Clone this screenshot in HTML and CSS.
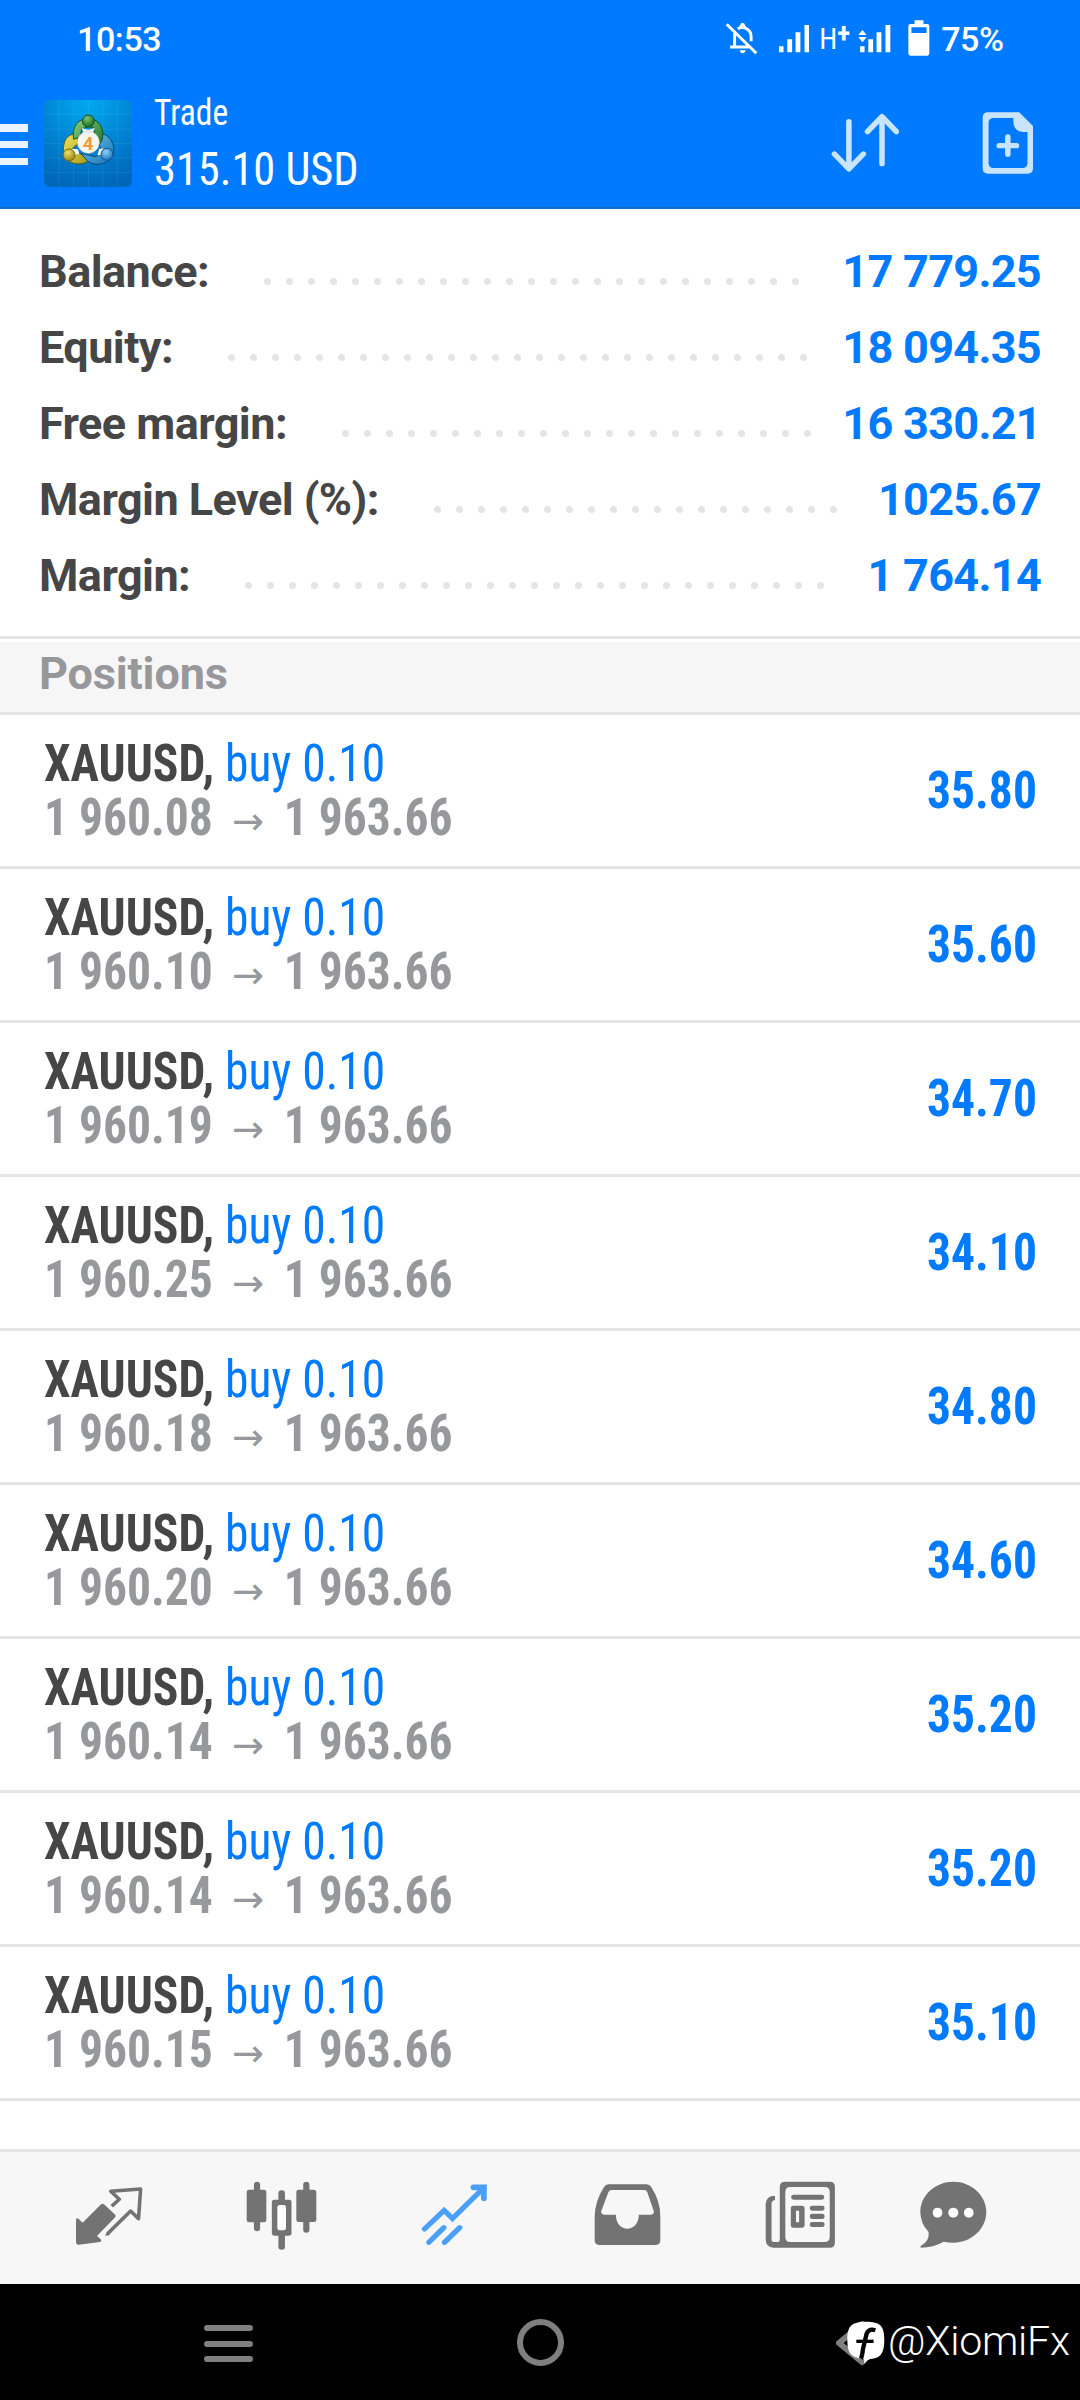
FILE: index.html
```html
<!DOCTYPE html>
<html lang="en">
<head>
<meta charset="utf-8">
<title>Trade</title>
<link rel="stylesheet" href="styles.css">
</head>
<body>
<header class="top">
  <div class="status">
    <span class="clock">10:53</span>
    <svg class="st bell" viewBox="536 60 96 108" preserveAspectRatio="none" fill="none" stroke="#fff" stroke-width="8.5">
      <path d="M541 73 627 160M564 99V140M551 141H605M573 86C592 76 613 90 612 112V124"/>
      <path d="M579 77Q581 68 587 68T595 77L600 84H576ZM579 151H596Q594 160 587 160T579 151Z" fill="#fff" stroke="none"/>
    </svg>
    <svg class="st sig1" viewBox="690 60 92 108" preserveAspectRatio="none" fill="#fff"><path d="M693 139h13v18h-13zM717 118h14v39h-14zM741 97h14v60h-14zM767 75h14v82h-14z"/></svg>
    <span class="net">H<span class="plus">+</span></span>
    <svg class="st sig2" viewBox="925 60 96 108" preserveAspectRatio="none" fill="#fff"><path d="M931 139h13v18h-13zM955 118h14v39h-14zM979 97h14v60h-14zM1005 75h14v82h-14zM938 90 950 105H926ZM938 127 950 111H926Z"/></svg>
    <svg class="st batt" viewBox="1070 60 63 108" preserveAspectRatio="none" fill="#fff"><path fill-rule="evenodd" d="M1089 61h26v11h11q6 0 6 7v81q0 7-6 7h-49q-6 0-6-7V79q0-7 6-7h12ZM1080 82v17h44V82Z"/></svg>
    <span class="pct">75%</span>
  </div>
  <div class="appbar">
    <div class="burger"><i></i><i></i><i></i></div>
    <svg class="logo" viewBox="42 30 264 261">
      <defs>
        <radialGradient id="bg" cx=".5" cy="0" r="1"><stop offset="0" stop-color="#00aaf0"/><stop offset=".55" stop-color="#0083d2"/><stop offset="1" stop-color="#0066b8"/></radialGradient>
        <linearGradient id="gr" x1="0" y1="0" x2="1" y2="1"><stop offset="0" stop-color="#8fd184"/><stop offset="1" stop-color="#16752a"/></linearGradient>
        <linearGradient id="ye" x1="0" y1="0" x2="1" y2="1"><stop offset="0" stop-color="#efe65c"/><stop offset="1" stop-color="#a89a18"/></linearGradient>
        <linearGradient id="bl" x1="0" y1="0" x2="1" y2="1"><stop offset="0" stop-color="#73c4f2"/><stop offset="1" stop-color="#1272b4"/></linearGradient>
        <radialGradient id="gh" cx=".4" cy=".3" r=".7"><stop offset="0" stop-color="#7cc470"/><stop offset="1" stop-color="#176a24"/></radialGradient>
        <radialGradient id="yh" cx=".4" cy=".3" r=".7"><stop offset="0" stop-color="#eee266"/><stop offset="1" stop-color="#988812"/></radialGradient>
        <radialGradient id="bh" cx=".4" cy=".3" r=".7"><stop offset="0" stop-color="#8ed2fa"/><stop offset="1" stop-color="#1b74bc"/></radialGradient>
      </defs>
      <rect x="42" y="30" width="264" height="261" rx="18" fill="url(#bg)"/>
      <path d="M87 30V291M131 30V291M175 30V291M218 30V291M262 30V291M42 72H306M42 117H306M42 160H306M42 204H306M42 247H306" stroke="#6fd0ff" stroke-opacity=".22" stroke-width="2"/>
      <g stroke-width="3">
        <path d="M133 132C98 136 94 184 108 204C122 226 160 226 174 212L150 190L134 194L126 176L148 158Z" fill="url(#ye)" stroke="#5a5d1a"/>
        <path d="M220 132C250 142 256 178 248 196C238 222 196 232 172 212L152 190L196 200L216 190L206 156Z" fill="url(#bl)" stroke="#0b4c7c"/>
        <path d="M131 148C124 108 146 86 175 86C204 86 222 112 218 140Q216 160 202 166L190 112L175 110L156 116L150 140Z" fill="url(#gr)" stroke="#155622"/>
        <path d="M155 114 175 120 194 114 188 132H162ZM124 176 144 178 148 192 132 196ZM226 176 208 176 202 196 220 194Z" fill="#f6f8ee"/>
        <circle cx="175" cy="93" r="18" fill="url(#gh)" stroke="#155622"/>
        <circle cx="117" cy="195" r="18" fill="url(#yh)" stroke="#6d6518"/>
        <circle cx="231" cy="193" r="18" fill="url(#bh)" stroke="#10558c"/>
      </g>
      <circle cx="175" cy="157" r="33" fill="#f7f5ef" stroke="#c9c6b8" stroke-width="2"/>
      <text x="174" y="179" class="four" text-anchor="middle">4</text>
    </svg>
    <div class="titles"><div class="t1">Trade</div><div class="t2">315.10 USD</div></div>
    <svg class="sort" viewBox="844 338 200 180" preserveAspectRatio="none" fill="none" stroke="#c9e4ff" stroke-width="16" stroke-linecap="round" stroke-linejoin="round"><path d="M896 364V505M854 461 896 506 938 461M992 490V350M950 394 992 349 1034 394"/></svg>
    <svg class="doc" viewBox="1284 336 150 186" preserveAspectRatio="none" fill="#c9e4ff"><path fill-rule="evenodd" d="M1302 337H1392L1432 378V505Q1432 521 1416 521H1302Q1286 521 1286 505V353Q1286 337 1302 337ZM1318 354Q1303 354 1303 369V489Q1303 504 1318 504H1401Q1416 504 1416 489V396H1404Q1375 394 1375 364V354Z"/><path d="M1359 411V463M1334 437H1384" stroke="#c9e4ff" stroke-width="16" stroke-linecap="round"/></svg>
  </div>
</header>

<section class="summary">
  <div class="line"><span class="lab">Balance:</span><span class="dots"></span><span class="val">17 779.25</span></div>
  <div class="line"><span class="lab">Equity:</span><span class="dots"></span><span class="val">18 094.35</span></div>
  <div class="line"><span class="lab">Free margin:</span><span class="dots"></span><span class="val">16 330.21</span></div>
  <div class="line"><span class="lab">Margin Level (%):</span><span class="dots"></span><span class="val">1025.67</span></div>
  <div class="line"><span class="lab">Margin:</span><span class="dots"></span><span class="val">1 764.14</span></div>
</section>
<h2 class="section">Positions</h2>
<main class="list">
  <div class="row"><div class="info"><div class="sym"><b>XAUUSD,</b> <span class="side">buy 0.10</span></div><div class="px">1 960.08<span class="arr">→</span>1 963.66</div></div><div class="pl">35.80</div></div>
  <div class="row"><div class="info"><div class="sym"><b>XAUUSD,</b> <span class="side">buy 0.10</span></div><div class="px">1 960.10<span class="arr">→</span>1 963.66</div></div><div class="pl">35.60</div></div>
  <div class="row"><div class="info"><div class="sym"><b>XAUUSD,</b> <span class="side">buy 0.10</span></div><div class="px">1 960.19<span class="arr">→</span>1 963.66</div></div><div class="pl">34.70</div></div>
  <div class="row"><div class="info"><div class="sym"><b>XAUUSD,</b> <span class="side">buy 0.10</span></div><div class="px">1 960.25<span class="arr">→</span>1 963.66</div></div><div class="pl">34.10</div></div>
  <div class="row"><div class="info"><div class="sym"><b>XAUUSD,</b> <span class="side">buy 0.10</span></div><div class="px">1 960.18<span class="arr">→</span>1 963.66</div></div><div class="pl">34.80</div></div>
  <div class="row"><div class="info"><div class="sym"><b>XAUUSD,</b> <span class="side">buy 0.10</span></div><div class="px">1 960.20<span class="arr">→</span>1 963.66</div></div><div class="pl">34.60</div></div>
  <div class="row"><div class="info"><div class="sym"><b>XAUUSD,</b> <span class="side">buy 0.10</span></div><div class="px">1 960.14<span class="arr">→</span>1 963.66</div></div><div class="pl">35.20</div></div>
  <div class="row"><div class="info"><div class="sym"><b>XAUUSD,</b> <span class="side">buy 0.10</span></div><div class="px">1 960.14<span class="arr">→</span>1 963.66</div></div><div class="pl">35.20</div></div>
  <div class="row"><div class="info"><div class="sym"><b>XAUUSD,</b> <span class="side">buy 0.10</span></div><div class="px">1 960.15<span class="arr">→</span>1 963.66</div></div><div class="pl">35.10</div></div>
</main>
<nav class="tabs">
  <a><svg width="68" viewBox="216 304 198 208" preserveAspectRatio="none" fill="#737373"><path d="M292 374Q297 370 302 375L333 405Q336 409 333 413L280 469 291 479Q295 485 288 487L228 495Q219 496 219 486V420Q221 413 227 418L238 429Z"/><path d="M323 380 345 359 320 335 407 328 401 417 378 394 310 463" fill="none" stroke="#737373" stroke-width="10.5" stroke-linejoin="round"/><path d="M303 467 309 460 320 460 313 468Z"/></svg></a>
  <a><svg width="71" viewBox="713 304 206 208" preserveAspectRatio="none" fill="#737373"><rect x="736" y="306" width="18" height="149" rx="9"/><rect x="715" y="330" width="57" height="98" rx="7"/><rect x="879" y="306" width="18" height="153" rx="9"/><rect x="859" y="330" width="58" height="97" rx="7"/><rect x="807" y="332" width="19" height="178" rx="9"/><rect x="788" y="360" width="57" height="108" rx="7"/><rect x="804" y="376" width="25" height="76" rx="7" fill="#fff"/></svg></a>
  <a><svg width="67" viewBox="1222 304 194 208" preserveAspectRatio="none" fill="none" stroke="#4a9ffa" stroke-width="15.500" stroke-linecap="round"><path d="M1232 448 1289 392 1313 417 1403 325" stroke-linejoin="miter"/><path d="M1374 323H1404V356" stroke-width="17"/><path d="M1245 488 1288 444M1290 488 1334 444"/></svg></a>
  <a><svg width="67" viewBox="156 304 196 208" preserveAspectRatio="none" fill="#737373"><path fill-rule="evenodd" d="M198 314H310Q318 314 324 323Q350 364 350 410V482Q350 496 337 496H171Q158 496 158 482V410Q159 364 185 323Q190 314 198 314ZM208 331Q201 331 198 338L177 395Q176 404 186 405H220C220 461 287 461 287 405H322Q333 404 331 395L312 338Q309 331 303 331Z"/></svg></a>
  <a><svg width="70.6" viewBox="655 304 205 208" preserveAspectRatio="none" fill="#737373"><path fill-rule="evenodd" d="M714 306H843Q858 306 858 321V489Q858 504 843 504H680Q657 503 657 479V372Q658 349 684 348V361Q674 362 674 374V480Q674 487 680 487H692Q698 487 698 480V321Q698 306 714 306ZM728 322Q714 322 714 337V472Q714 487 728 487H828Q843 487 843 472V337Q843 322 828 322Z"/><rect x="731" y="345" width="96" height="15" rx="7"/><path fill-rule="evenodd" d="M738 378h24q8 0 8 8v50q0 8-8 8h-24q-8 0-8-8v-50q0-8 8-8ZM745 393v35h9v-35Z"/><rect x="785" y="378" width="43" height="15" rx="7"/><rect x="785" y="402" width="43" height="16" rx="7"/><rect x="785" y="427" width="43" height="15" rx="7"/></svg></a>
  <a class="last"><svg width="67" viewBox="1102 304 195 208" preserveAspectRatio="none" fill="#737373"><path d="M1199 306C1252 306 1295 347 1295 397S1252 489 1199 489Q1184 489 1171 486Q1140 504 1105 504Q1102 502 1104 499Q1131 484 1127 457Q1103 431 1103 397C1103 347 1146 306 1199 306Z"/><g fill="#fff"><ellipse cx="1153" cy="399" rx="14" ry="15"/><ellipse cx="1199" cy="399" rx="14.500" ry="15"/><ellipse cx="1244" cy="399" rx="14" ry="15"/></g></svg></a>
</nav>
<footer class="sysnav">
  <div class="recents"><i></i><i></i><i></i></div>
  <div class="home"></div>
  <svg class="back" viewBox="0 0 32 46" fill="none" stroke="#7f7f7f" stroke-width="6" stroke-linejoin="round"><path d="M27 4 4 23 27 42Z"/></svg>
  <div class="mark">
    <svg viewBox="892 725 110 130" preserveAspectRatio="none"><path d="M947 727C989 727 1000 740 1000 781C1000 818 992 837 959 839Q949 842 943 854L941 838C902 835 893 820 893 781C893 740 905 727 947 727Z" fill="#fff"/><path d="M974 753Q951 745 947 771L938 810Q936 831 932 838" fill="none" stroke="#000" stroke-width="12.500"/><path d="M919 786H969" stroke="#000" stroke-width="10"/></svg>
    <span>@XiomiFx</span>
  </div>
</footer>
</body>
</html>
```
FILE: styles.css
```css
* { box-sizing: border-box; }
body { margin: 0; width: 1080px; height: 2400px; background: #fff; font-family: Roboto, "Liberation Sans", sans-serif; display: flex; flex-direction: column; overflow: hidden; }
svg { display: block; flex: none; }
.top { height: 209px; background: #007aff; border-bottom: 2px solid #146dca; color: #fff; flex: none; }
.status { height: 76px; display: flex; align-items: flex-start; padding: 20px 0 0 77px; white-space: nowrap; }
.clock, .pct { font-size: 34px; line-height: 39px; font-weight: 500; letter-spacing: -.4px; }
.clock { width: 647.600px; }
.st { height: 36px; }
.bell { width: 33px; margin-right: 20px; }
.sig1 { width: 31.700px; margin-right: 10px; }
.net { font-size: 29px; line-height: 38px; width: 39.200px; font-stretch: condensed; }
.plus { font-size: 27px; font-weight: 700; position: relative; top: -6px; }
.sig2 { width: 33px; margin-right: 17px; }
.batt { width: 21.700px; margin-right: 11px; }
.appbar { display: flex; align-items: flex-start; height: 131px; padding-top: 23px; }
.burger { width: 44px; height: 41px; margin-top: 25px; display: flex; flex-direction: column; justify-content: space-between; }
.burger i { width: 27.500px; height: 7.500px; background: #e9f4ff; }
.logo { width: 88px; height: 87px; margin-top: 1px; }
.four { font: 700 56px Roboto, sans-serif; fill: #f29a3c; }
.titles { margin-left: 22px; width: 676.600px; font-stretch: condensed; }
.t1, .t2 { transform-origin: 0 0; transform: scaleX(.944); }
.t1 { font-size: 36px; line-height: 42px; margin-top: -7px; transform: scaleX(.93); }
.t2 { font-size: 47px; line-height: 54px; margin-top: 8px; }
.sort { width: 68.900px; height: 60px; margin-top: 13.700px; margin-right: 82.600px; }
.doc { width: 51.700px; height: 62px; margin-top: 13px; }
.summary { height: 430px; border-bottom: 3px solid #e4e4e4; padding: 25px 39px 0 39px; flex: none; }
.line { height: 76px; display: flex; align-items: center; font-size: 45px; font-weight: 700; color: #464646; line-height: 76px; letter-spacing: -.55px; white-space: nowrap; }
.val { color: #007aff; letter-spacing: -.7px; }
.dots { flex: 1; height: 7px; margin: 19px 30px 0 55px; }
/* only whole dots: n dots need 22(n-1)+7 px */
.dots::before { content: ""; display: block; height: 7px; width: round(down, calc(100% + 15px), 22px); background: radial-gradient(circle at 3.5px 3.5px, #e5e5e5 3.1px, transparent 3.9px) 0 0 / 22px 7px repeat-x; }
.section { margin: 3px 0 0; height: 73px; flex: none; background: #f6f6f6; border-bottom: 3px solid #e4e4e4; padding-left: 39px; font-size: 45px; line-height: 63px; font-weight: 700; letter-spacing: -.15px; color: #97989b; }
.list { flex: none; height: 1434px; }
.row { height: 154px; border-bottom: 3px solid #e4e4e4; display: flex; justify-content: space-between; padding: 22px 43px 0 44px; font-size: 51px; line-height: 54px; font-stretch: condensed; white-space: pre; color: #464646; }
.info { transform: scaleX(.932); transform-origin: 0 0; }
.side, .pl { color: #007aff; }
.px { color: #97989b; font-weight: 700; }
.arr { display: inline-block; width: 76px; text-align: center; font-family: "Noto Sans", "DejaVu Sans", sans-serif; font-size: 38px; font-weight: 500; line-height: 1; transform: translateY(-1px) scaleX(1.2); }
.pl { font-weight: 700; margin-top: 27px; transform: scaleX(.932); transform-origin: 100% 0; }
.tabs { height: 135px; flex: none; background: #f7f7f7; border-top: 3px solid #e4e4e4; display: flex; padding: 29.300px 0 0 22px; }
.tabs a { width: 173px; display: flex; justify-content: center; }
.tabs a.last { width: 132px; }
.tabs svg { height: 69.300px; }
.sysnav { height: 116px; flex: none; background: #000; display: flex; position: relative; padding: 35px 0 0 204px; }
.recents { width: 48.500px; height: 37px; margin-top: 6px; display: flex; flex-direction: column; justify-content: space-between; }
.recents i { height: 6px; border-radius: 3px; background: #7f7f7f; }
.home { width: 47px; height: 47px; border: 6px solid #7f7f7f; border-radius: 50%; margin-left: 264.500px; }
.back { width: 32px; height: 46px; margin: 1px 0 0 271px; }
.mark { position: absolute; left: 847px; top: 37px; display: flex; color: #fff; font-size: 41px; line-height: 41px; font-weight: 340; letter-spacing: -.2px; }
.mark svg { width: 38px; height: 43.300px; margin-right: 3px; }
```
